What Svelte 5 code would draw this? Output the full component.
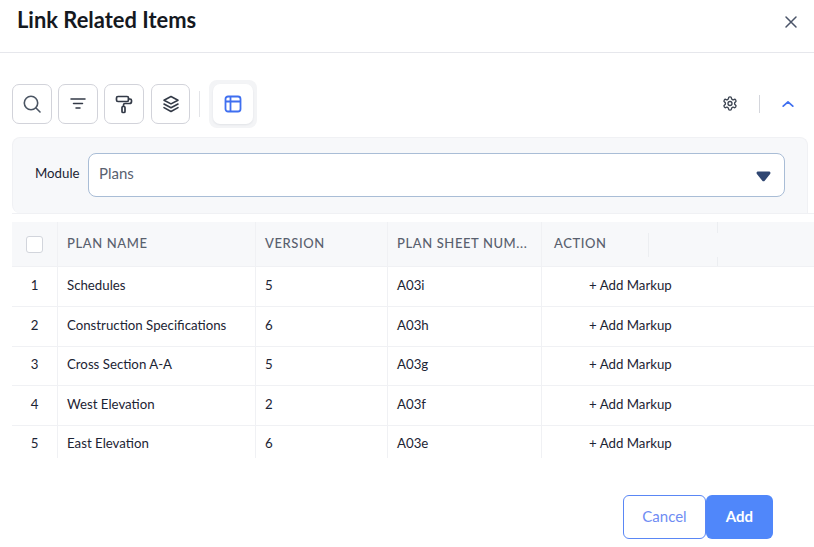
<script>
  const rows = [
    { n: 1, name: 'Schedules', version: 5, sheet: 'A03i' },
    { n: 2, name: 'Construction Specifications', version: 6, sheet: 'A03h' },
    { n: 3, name: 'Cross Section A-A', version: 5, sheet: 'A03g' },
    { n: 4, name: 'West Elevation', version: 2, sheet: 'A03f' },
    { n: 5, name: 'East Elevation', version: 6, sheet: 'A03e' }
  ];
</script>

<div class="dialog">
  <header class="head">
    <h1>Link Related Items</h1>
    <button class="close" aria-label="Close">
      <svg width="14" height="14" viewBox="0 0 14 14" fill="none" stroke="#4a5468" stroke-width="1.5" stroke-linecap="round"><path d="M2 2l10 10M12 2L2 12"/></svg>
    </button>
  </header>

  <div class="toolbar">
    <button class="tool" aria-label="Search">
      <svg width="18" height="18" viewBox="0 0 18 18" fill="none" stroke="#4b5563" stroke-width="1.6" stroke-linecap="round"><circle cx="8" cy="8" r="6.700"/><path d="M13 13l4 4"/></svg>
    </button>
    <button class="tool" aria-label="Filter">
      <svg width="20" height="20" viewBox="0 0 20 20" fill="none" stroke="#333a47" stroke-width="1.5" stroke-linecap="round"><path d="M3 5h14M5.500 9.500h9M8 14h4"/></svg>
    </button>
    <button class="tool" aria-label="Paint">
      <svg width="20" height="20" viewBox="0 0 20 20" fill="none" stroke="#333a47" stroke-width="1.700" stroke-linejoin="round" stroke-linecap="round"><rect x="2.500" y="2.500" width="12" height="5" rx="1.500"/><path d="M14.500 5h1.500a1.500 1.500 0 0 1 1.500 1.500v1a2 2 0 0 1-2 2H11a1.500 1.500 0 0 0-1.500 1.500v1"/><rect x="8" y="12.500" width="3" height="6" rx="1"/></svg>
    </button>
    <button class="tool layers" aria-label="Layers">
      <svg width="20" height="20" viewBox="0 0 20 20" fill="none" stroke="#333a47" stroke-width="1.600" stroke-linejoin="round" stroke-linecap="round"><path d="M10 2.500l7 3.700-7 3.700-7-3.700z"/><path d="M3 10l7 3.700 7-3.700"/><path d="M3 13.600l7 3.900 7-3.900"/></svg>
    </button>
    <span class="sep"></span>
    <span class="halo">
      <button class="tool active" aria-label="Table view">
        <svg width="18" height="18" viewBox="0 0 18 18" fill="none" stroke="#3f6ff0" stroke-width="1.800" stroke-linejoin="round"><rect x="1.500" y="1.500" width="15" height="15" rx="2.500"/><path d="M1.500 6.500h15M6.500 1.500v15"/></svg>
      </button>
    </span>
    <span class="spacer"></span>
    <button class="plain gear" aria-label="Settings">
      <svg width="17" height="17" viewBox="0 0 24 24" fill="none" stroke="#3c4452" stroke-width="2" stroke-linecap="round" stroke-linejoin="round"><path d="M12.220 2h-.44a2 2 0 0 0-2 2v.18a2 2 0 0 1-1 1.730l-.43.25a2 2 0 0 1-2 0l-.15-.08a2 2 0 0 0-2.730.73l-.22.38a2 2 0 0 0 .73 2.730l.15.1a2 2 0 0 1 1 1.720v.51a2 2 0 0 1-1 1.740l-.15.09a2 2 0 0 0-.73 2.730l.22.38a2 2 0 0 0 2.730.73l.15-.08a2 2 0 0 1 2 0l.43.25a2 2 0 0 1 1 1.730V20a2 2 0 0 0 2 2h.44a2 2 0 0 0 2-2v-.18a2 2 0 0 1 1-1.730l.43-.25a2 2 0 0 1 2 0l.15.08a2 2 0 0 0 2.730-.73l.22-.39a2 2 0 0 0-.73-2.730l-.15-.08a2 2 0 0 1-1-1.740v-.5a2 2 0 0 1 1-1.740l.15-.09a2 2 0 0 0 .73-2.730l-.22-.38a2 2 0 0 0-2.730-.73l-.15.08a2 2 0 0 1-2 0l-.43-.25a2 2 0 0 1-1-1.730V4a2 2 0 0 0-2-2z"/><circle cx="12" cy="12" r="3"/></svg>
    </button>
    <span class="sep2"></span>
    <button class="plain chev" aria-label="Collapse">
      <svg width="12" height="8" viewBox="0 0 12 8" fill="none" stroke="#3f6ff0" stroke-width="1.700" stroke-linecap="round" stroke-linejoin="round"><path d="M1.200 6.200L6 1.800l4.800 4.400"/></svg>
    </button>
  </div>

  <div class="filter-wrap">
    <section class="filter">
      <span class="label">Module</span>
      <div class="select">
        <span>Plans</span>
        <svg class="arrow" width="15" height="11" viewBox="0 0 15 11" fill="#2f4672"><path d="M2.200 0.500h10.600c1.500 0 2.100 1.300 1.300 2.400L8.700 9.700c-.6.800-1.800.8-2.400 0L.9 2.900C.1 1.800.7.500 2.200.500z"/></svg>
      </div>
    </section>
  </div>

  <div class="table">
    <div class="row headrow">
      <div class="cell c0"><span class="check"></span></div>
      <div class="cell c1">PLAN NAME</div>
      <div class="cell c2">VERSION</div>
      <div class="cell c3">PLAN SHEET NUM...</div>
      <div class="cell c4">ACTION<i class="tick t1"></i><i class="tick t2"></i><i class="tick t3"></i></div>
    </div>
    {#each rows as r}
      <div class="row body">
        <div class="cell c0">{r.n}</div>
        <div class="cell c1">{r.name}</div>
        <div class="cell c2">{r.version}</div>
        <div class="cell c3">{r.sheet}</div>
        <div class="cell c4"><span class="markup">+ Add Markup</span></div>
      </div>
    {/each}
  </div>

  <footer class="foot">
    <button class="cancel">Cancel</button>
    <button class="add">Add</button>
  </footer>
</div>

<style>
  :global(body) {
    margin: 0;
    background: #fff;
  }
  .dialog {
    width: 814px;
    height: 547px;
    overflow: hidden;
    font-family: Lato, "Liberation Sans", sans-serif;
    color: #1c2434;
    font-size: 13.25px;
  }
  button {
    font-family: inherit;
    padding: 0;
    cursor: pointer;
  }
  .head {
    height: 52px;
    box-sizing: content-box;
    border-bottom: 1px solid #e6e7ec;
    display: flex;
    align-items: flex-start;
    justify-content: space-between;
    padding: 0 17px;
  }
  h1 {
    margin: 7px 0 0;
    font-size: 21.9px;
    line-height: 26px;
    font-weight: 700;
    color: #15191f;
  }
  .close {
    border: 0;
    background: none;
    margin: 15px -1px 0 0;
    width: 14px;
    height: 14px;
    display: flex;
  }
  .toolbar {
    display: flex;
    align-items: center;
    margin-top: 30px;
    height: 41px;
    padding: 0 12px;
  }
  .tool {
    width: 40px;
    height: 40px;
    box-sizing: border-box;
    border: 1px solid #d2d3da;
    border-radius: 7px;
    background: #fff;
    display: flex;
    align-items: center;
    justify-content: center;
    margin-right: 6px;
  }
  .layers {
    width: 39px;
    margin-left: 1px;
    margin-right: 0;
  }
  .sep {
    width: 1px;
    height: 26px;
    background: #e3e4e8;
    margin: 0 9px;
  }
  .halo {
    width: 48px;
    height: 48px;
    box-sizing: border-box;
    background: #f3f4f6;
    border-radius: 8px;
    display: flex;
    align-items: center;
    justify-content: center;
  }
  .active {
    margin: 0;
    border: 0;
    box-shadow: 0 1px 2px rgba(30, 40, 60, 0.08);
  }
  .spacer {
    flex: 1;
  }
  .plain {
    border: 0;
    background: none;
    display: flex;
    align-items: center;
    justify-content: center;
  }
  .gear {
    width: 16px;
    height: 16px;
  }
  .sep2 {
    width: 1px;
    height: 18px;
    background: #d4d6dc;
    margin: 0 22px 0 21px;
  }
  .chev {
    width: 12px;
    height: 8px;
    margin-right: 8px;
  }
  .filter-wrap {
    margin: 13px 0 0 12px;
    padding-right: 6px;
    border-bottom: 1px solid #f0f1f4;
  }
  .filter {
    height: 76px;
    box-sizing: border-box;
    background: #f7f8fa;
    border: 1px solid #f0f1f4;
    border-bottom: 0;
    border-radius: 8px 8px 0 8px;
    display: flex;
    align-items: flex-start;
    padding: 15px 22px 0;
  }
  .label {
    width: 53px;
    margin-top: 12px;
    line-height: 16px;
    color: #1c2434;
  }
  .select {
    flex: 1;
    height: 44px;
    box-sizing: border-box;
    background: #fff;
    border: 1px solid #a9bdd6;
    border-radius: 8px;
    display: flex;
    align-items: center;
    justify-content: space-between;
    padding: 0 13px 4px 10px;
    font-size: 15px;
    color: #59616f;
  }
  .arrow {
    margin-top: 6px;
  }
  .table {
    margin: 8px 0 0 12px;
    height: 236px;
    overflow: hidden;
  }
  .row {
    display: grid;
    grid-template-columns: 46px 198px 132px 154px 1fr;
    height: 39.500px;
    box-sizing: border-box;
    border-bottom: 1px solid #f0f1f4;
    align-items: stretch;
  }
  .headrow {
    height: 45px;
    background: #f7f8fa;
    color: #59606e;
    font-size: 13px;
    font-weight: 500;
    letter-spacing: 0.6px;
  }
  .headrow + .body {
    height: 40.200px;
  }
  .cell {
    display: flex;
    align-items: center;
    padding: 0 0 2px 9px;
    border-right: 1px solid #f0f1f4;
    position: relative;
    white-space: nowrap;
  }
  .body .cell {
    padding-bottom: 3px;
  }
  .c0 {
    justify-content: center;
    padding-left: 0;
  }
  .c4 {
    padding-left: 12px;
    border-right: 0;
  }
  .check {
    width: 17px;
    height: 17px;
    margin-top: 2px;
    box-sizing: border-box;
    border: 1.500px solid #d2d5dc;
    border-radius: 3px;
    background: #fff;
  }
  .markup {
    margin-left: 35px;
  }
  .tick {
    position: absolute;
    width: 1px;
    background: #eceef1;
  }
  .t1 {
    left: 106px;
    top: 11px;
    height: 24px;
  }
  .t2 {
    left: 175px;
    top: 0;
    height: 11px;
  }
  .t3 {
    left: 175px;
    bottom: 0;
    height: 9px;
  }
  .foot {
    display: flex;
    justify-content: flex-end;
    margin-top: 37px;
    padding-right: 41px;
  }
  .cancel,
  .add {
    height: 44px;
    box-sizing: border-box;
    font-size: 15px;
    border-radius: 6px;
    padding-bottom: 2px;
  }
  .cancel {
    width: 83px;
    background: #fff;
    color: #6f8cf3;
    border: 1px solid #5a87f5;
  }
  .add {
    width: 67px;
    background: #5087fa;
    color: #fff;
    border: 0;
    font-weight: 700;
  }
</style>
